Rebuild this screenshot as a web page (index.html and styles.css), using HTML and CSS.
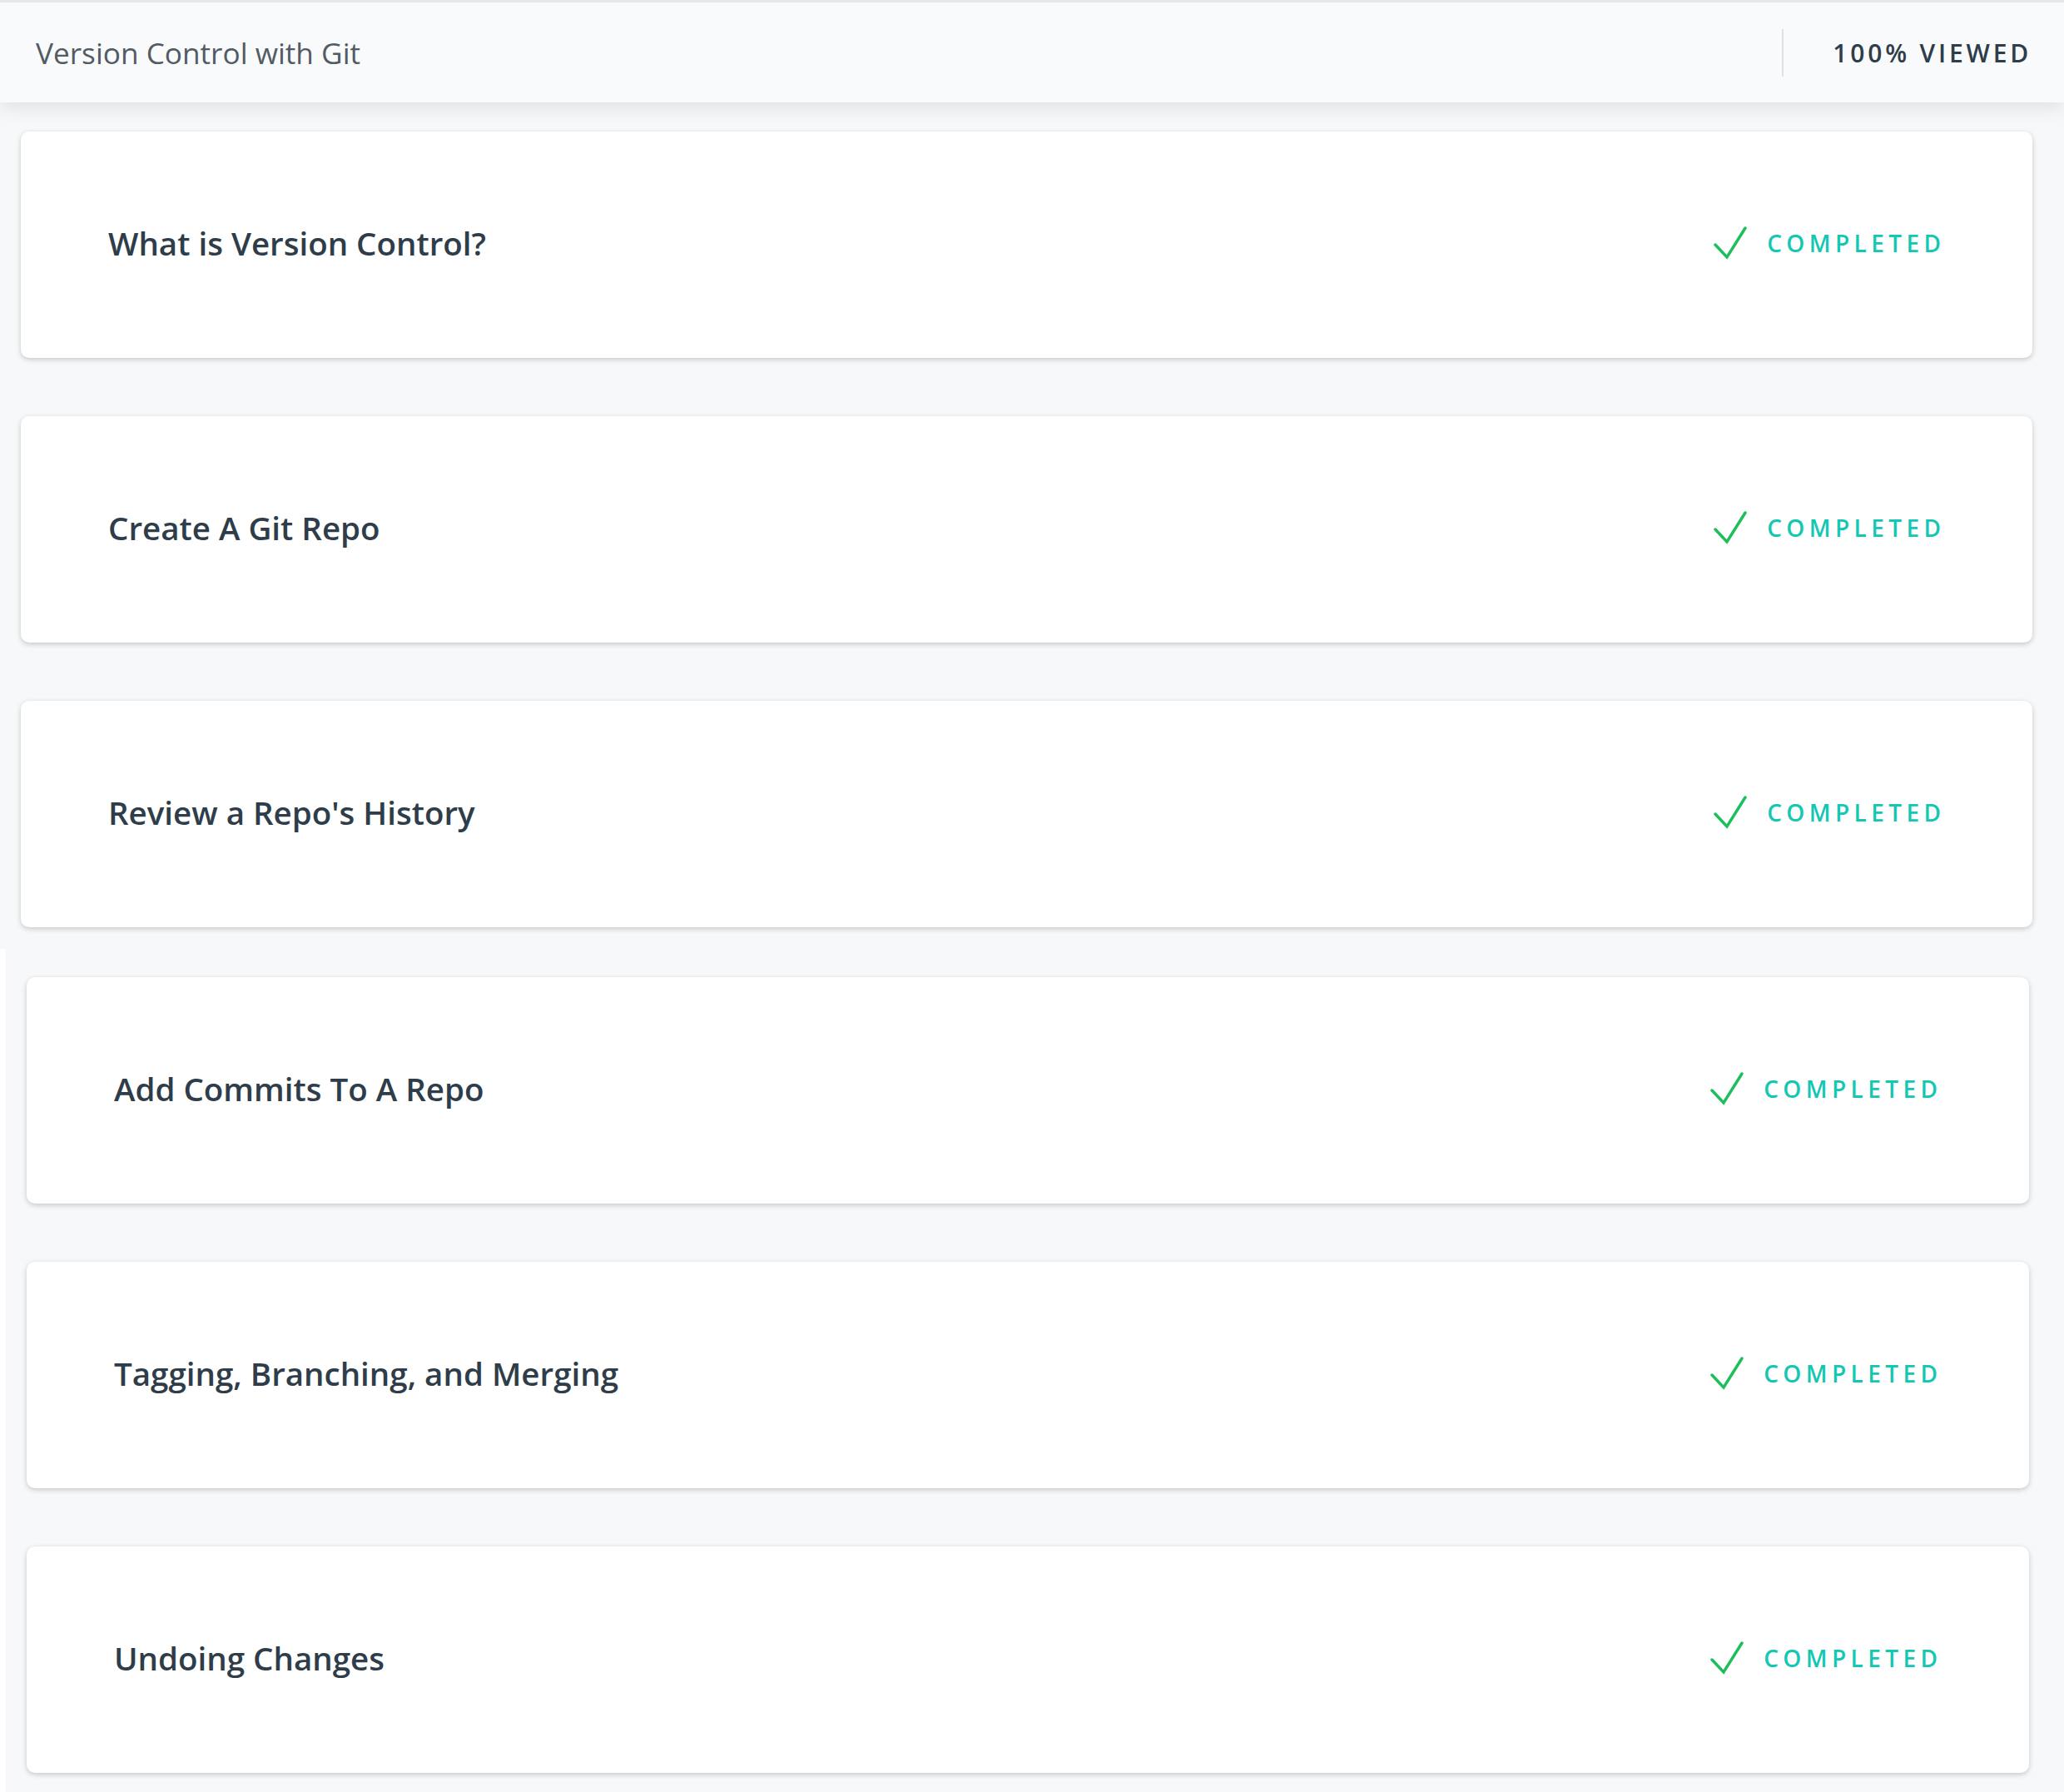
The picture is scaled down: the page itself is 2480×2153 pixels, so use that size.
FILE: index.html
```html
<!DOCTYPE html>
<html lang="en">
<head>
<meta charset="utf-8">
<title>Version Control with Git</title>
<link rel="stylesheet" href="styles.css">
</head>
<body>
<header class="lesson-header">
  <h1 class="lesson-title">Version Control with Git</h1>
  <div class="lesson-progress">
    <span class="divider"></span>
    <span class="viewed">100% Viewed</span>
  </div>
</header>
<main>
  <section class="concepts concepts-upper">
    <div class="card">
      <h2 class="card-title">What is Version Control?</h2>
      <div class="status"><svg class="check" viewBox="0 0 40 40"><polyline points="2,22 16,37 38,2"/></svg><span>Completed</span></div>
    </div>
    <div class="card">
      <h2 class="card-title">Create A Git Repo</h2>
      <div class="status"><svg class="check" viewBox="0 0 40 40"><polyline points="2,22 16,37 38,2"/></svg><span>Completed</span></div>
    </div>
    <div class="card">
      <h2 class="card-title">Review a Repo's History</h2>
      <div class="status"><svg class="check" viewBox="0 0 40 40"><polyline points="2,22 16,37 38,2"/></svg><span>Completed</span></div>
    </div>
  </section>
  <section class="concepts concepts-lower">
    <div class="card">
      <h2 class="card-title">Add Commits To A Repo</h2>
      <div class="status"><svg class="check" viewBox="0 0 40 40"><polyline points="2,22 16,37 38,2"/></svg><span>Completed</span></div>
    </div>
    <div class="card">
      <h2 class="card-title">Tagging, Branching, and Merging</h2>
      <div class="status"><svg class="check" viewBox="0 0 40 40"><polyline points="2,22 16,37 38,2"/></svg><span>Completed</span></div>
    </div>
    <div class="card">
      <h2 class="card-title">Undoing Changes</h2>
      <div class="status"><svg class="check" viewBox="0 0 40 40"><polyline points="2,22 16,37 38,2"/></svg><span>Completed</span></div>
    </div>
  </section>
</main>
</body>
</html>
```
FILE: styles.css
```css
html, body {
  margin: 0;
  padding: 0;
  background: #ffffff;
  font-family: "Open Sans", "Noto Sans", "Liberation Sans", sans-serif;
}

.lesson-header {
  position: relative;
  z-index: 2;
  box-sizing: border-box;
  height: 123px;
  border-top: 3px solid #e4e7eb;
  background: #f9fafc;
  display: flex;
  align-items: center;
  justify-content: space-between;
  padding: 0 43px 0 43px;
  box-shadow: 0 6px 22px rgba(0, 0, 0, 0.10);
}

.lesson-title {
  margin: 0;
  font-size: 35.2px;
  font-weight: 400;
  color: #525b64;
}

.lesson-progress {
  display: flex;
  align-items: center;
  gap: 59px;
}

.divider {
  display: block;
  width: 2px;
  height: 57px;
  background: #dde1e5;
}

.viewed {
  font-size: 30px;
  font-weight: 600;
  color: #2e3d49;
  letter-spacing: 3.8px;
  text-transform: uppercase;
  margin-right: -4px;
}

.concepts {
  display: flex;
  flex-direction: column;
  gap: 70px;
  background: #f7f8fa;
}

.concepts-upper {
  padding: 35px 38px 26px 25px;
}

.concepts-lower {
  margin-left: 7px;
  padding: 34px 42px 26px 25px;
}

.card {
  box-sizing: border-box;
  height: 272px;
  background: #ffffff;
  border-radius: 10px;
  box-shadow: 0 2px 6px rgba(0, 0, 0, 0.2);
  display: flex;
  align-items: center;
  justify-content: space-between;
  padding: 0 110px 4px 105px;
}

.card-title {
  margin: 0;
  font-size: 38.5px;
  font-weight: 600;
  color: #2e3d49;
}

.status {
  display: flex;
  align-items: center;
  gap: 24px;
  color: #13c7b3;
  font-size: 28px;
  font-weight: 600;
  letter-spacing: 5.4px;
  text-transform: uppercase;
}

.status span {
  margin-right: -5.4px;
}

.check {
  width: 40px;
  height: 40px;
  fill: none;
  stroke: #1dbf5c;
  stroke-width: 3.5;
  stroke-linecap: round;
  stroke-linejoin: miter;
}
```
